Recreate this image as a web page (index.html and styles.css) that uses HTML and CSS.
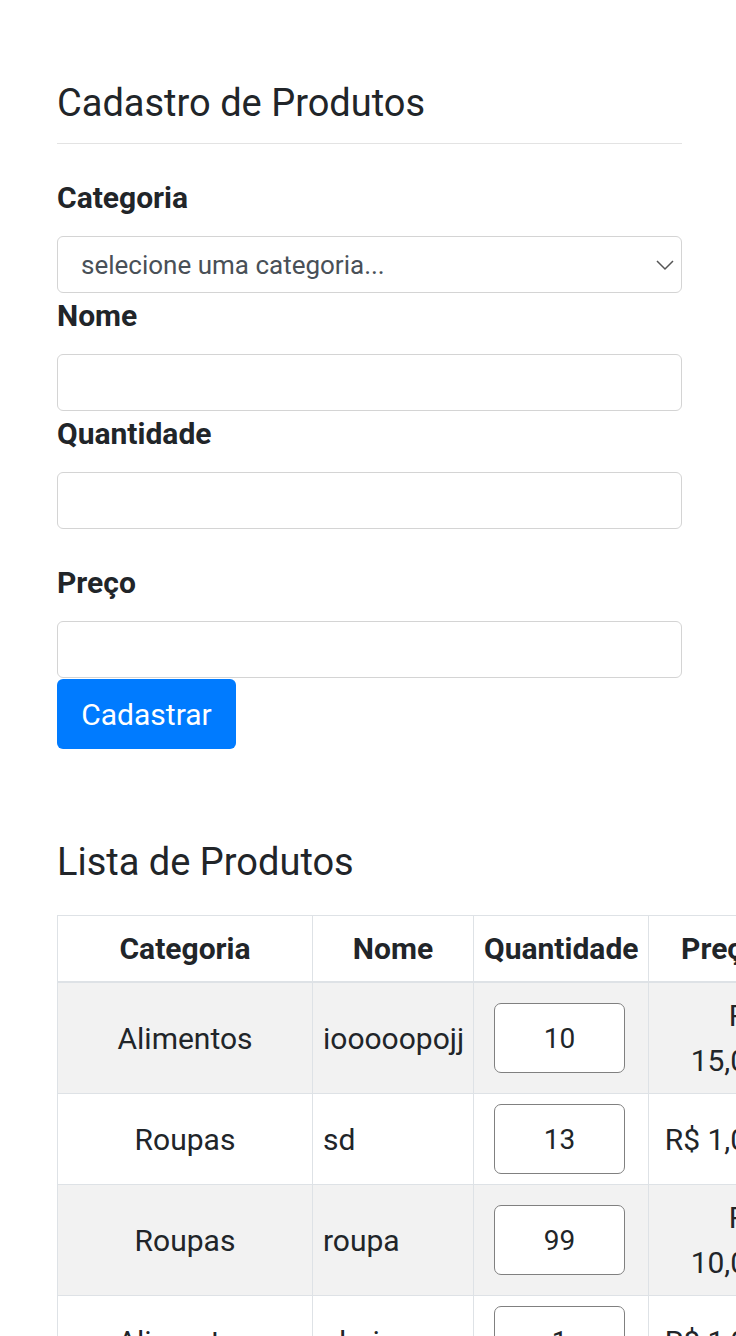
FILE: index.html
```html
<!DOCTYPE html>
<html lang="pt-BR">
<head>
<meta charset="utf-8">
<title>Cadastro de Produtos</title>
<link rel="stylesheet" href="styles.css">
</head>
<body>
<div class="container">
  <h3 class="title">Cadastro de Produtos</h3>
  <hr class="divider">
  <form class="form">
    <label class="label">Categoria</label>
    <div class="select-wrap">
      <select class="control select">
        <option>selecione uma categoria...</option>
      </select>
      <svg class="chevron" width="18" height="12" viewBox="0 0 18 12"><path d="M1 2 L9 10 L17 2" fill="none" stroke="#555" stroke-width="1.5"/></svg>
    </div>
    <label class="label">Nome</label>
    <input class="control input" type="text">
    <label class="label">Quantidade</label>
    <input class="control input" type="text">
    <label class="label label-gap">Preço</label>
    <input class="control input" type="text">
    <button type="button" class="btn">Cadastrar</button>
  </form>

  <h3 class="title list-title">Lista de Produtos</h3>
  <div class="table-wrap">
    <table class="table">
      <colgroup>
        <col class="c1"><col class="c2"><col class="c3"><col class="c4"><col class="c5">
      </colgroup>
      <thead>
        <tr><th>Categoria</th><th>Nome</th><th>Quantidade</th><th>Preço</th><th>Ações</th></tr>
      </thead>
      <tbody>
        <tr class="odd"><td class="cat">Alimentos</td><td class="name">iooooopojj</td><td class="qty"><input class="qty-input" value="10"></td><td class="price">R$ 15,00</td><td></td></tr>
        <tr><td class="cat">Roupas</td><td class="name">sd</td><td class="qty"><input class="qty-input" value="13"></td><td class="price">R$ 1,00</td><td></td></tr>
        <tr class="odd"><td class="cat">Roupas</td><td class="name">roupa</td><td class="qty"><input class="qty-input" value="99"></td><td class="price">R$ 10,00</td><td></td></tr>
        <tr><td class="cat">Alimentos</td><td class="name">abaia</td><td class="qty"><input class="qty-input" value="1"></td><td class="price">R$ 1,00</td><td></td></tr>
      </tbody>
    </table>
  </div>
</div>
</body>
</html>
```
FILE: styles.css
```css
html, body {
  margin: 0;
  padding: 0;
  background: #fff;
  overflow-x: hidden;
}
body {
  font-family: Roboto, "Liberation Sans", sans-serif;
  color: #212529;
}
.container {
  width: 625px;
  padding-left: 57px;
}
.title {
  margin: 0;
  padding-top: 80px;
  font-size: 38px;
  line-height: 46px;
  font-weight: 400;
}
.divider {
  margin: 17px 0 0;
  border: 0;
  border-top: 1px solid #e3e3e3;
  height: 0;
}
.form {
  display: flex;
  flex-direction: column;
  align-items: flex-start;
  padding-top: 31px;
}
.label {
  display: block;
  font-size: 30px;
  line-height: 45px;
  font-weight: 700;
  margin-bottom: 16px;
}
.label-gap {
  margin-top: 31px;
}
.control {
  box-sizing: border-box;
  width: 625px;
  height: 57px;
  border: 1px solid #d4d4d4;
  border-radius: 6px;
  background: #fff;
  font-family: Roboto, "Liberation Sans", sans-serif;
  font-size: 26px;
  color: #495057;
  margin: 0;
}
.select-wrap {
  position: relative;
}
.select {
  appearance: none;
  -webkit-appearance: none;
  padding: 0 50px 0 23px;
}
.chevron {
  position: absolute;
  right: 8px;
  top: 23px;
}
.input {
  padding: 0 23px;
}
.btn {
  width: 179px;
  height: 70px;
  margin-top: 1px;
  border: 0;
  border-radius: 6px;
  background: #007bff;
  color: #fff;
  font-family: Roboto, "Liberation Sans", sans-serif;
  font-size: 30px;
  padding: 0;
}
.list-title {
  padding-top: 90px;
}
.table-wrap {
  margin-top: 30px;
  width: 679px;
  overflow: hidden;
}
.table {
  border-collapse: collapse;
  table-layout: fixed;
  width: 900px;
  font-size: 30px;
  line-height: 45px;
}
.c1 { width: 255px; }
.c2 { width: 161px; }
.c3 { width: 175px; }
.c4 { width: 144px; }
.c5 { width: 165px; }
.table th,
.table td {
  border: 1px solid #dee2e6;
  padding: 10px;
  vertical-align: middle;
}
.table th {
  font-weight: 700;
  text-align: center;
  border-bottom: 2px solid #dee2e6;
}
.table tr.odd td {
  background: #f2f2f2;
}
.cat { text-align: center; }
.name { text-align: left; }
.qty { text-align: center; }
.table td.price {
  text-align: right;
  padding-left: 8px;
  padding-right: 28px;
}
.qty-input {
  box-sizing: border-box;
  width: 131px;
  height: 70px;
  margin: 0 3px 0 0;
  border: 1.5px solid #808080;
  border-radius: 7px;
  background: #fff;
  text-align: center;
  font-family: Roboto, "Liberation Sans", sans-serif;
  font-size: 28px;
  color: #212529;
  padding: 0;
  vertical-align: middle;
}
```
